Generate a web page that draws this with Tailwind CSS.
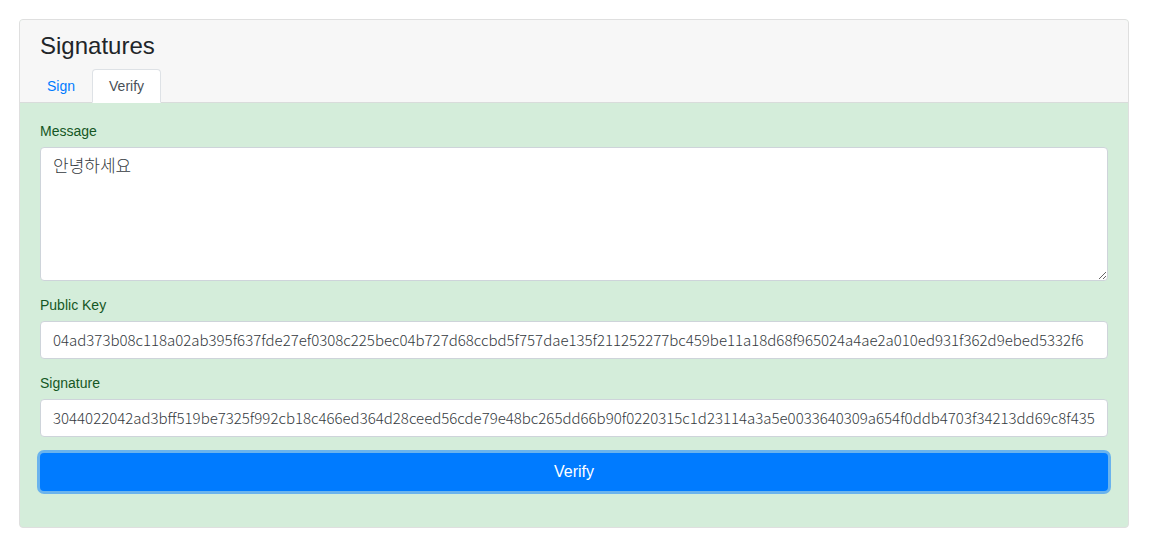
<!DOCTYPE html>
<html lang="en">
<head>
<meta charset="utf-8">
<meta name="viewport" content="width=device-width, initial-scale=1">
<title>Signatures</title>
<script src="https://cdn.jsdelivr.net/npm/@tailwindcss/browser@4"></script>
</head>
<body class="bg-white pt-[19px] pr-[23px] pb-7 pl-[19px] font-['Liberation_Sans','Noto_Sans_CJK_KR',sans-serif] text-sm/4 text-[#212529]">
<main class="rounded-sm border border-[#dfdfdf] bg-[#d4edda]">
  <header class="rounded-t-[3px] border-b border-[#d9dcdb] bg-[#f7f7f7] px-5 pt-3">
    <h1 class="mb-2 text-2xl/[28px] pb-px">Signatures</h1>
    <nav class="-mx-[10px] -mb-px flex">
      <a href="#sign" class="rounded-t-sm border border-transparent px-4 py-2 text-[#007bff]">Sign</a>
      <a href="#verify" aria-current="page" class="rounded-t-sm border border-[#dee2e6] border-b-white bg-white px-4 py-2 text-[#495057]">Verify</a>
    </nav>
  </header>
  <form id="verify" class="flex flex-col gap-4 px-5 pt-5 pb-9 text-[#155724]">
    <div class="flex flex-col gap-2">
      <label for="message">Message</label>
      <textarea id="message" class="block h-[134px] w-full resize-y rounded-sm border border-[#ced4da] bg-white px-3 py-1 font-['Noto_Sans_CJK_KR',sans-serif] text-[17px]/[26px] font-light text-[#343a40] outline-none">안녕하세요</textarea>
    </div>
    <div class="flex flex-col gap-2">
      <label for="public-key">Public Key</label>
      <input id="public-key" type="text" class="block h-[38px] w-full rounded-sm border border-[#ced4da] bg-white px-3 pt-1 pb-1.5 font-['Noto_Sans_CJK_KR',sans-serif] text-[15px]/6 font-light text-[#343a40] outline-none" value="04ad373b08c118a02ab395f637fde27ef0308c225bec04b727d68ccbd5f757dae135f211252277bc459be11a18d68f965024a4ae2a010ed931f362d9ebed5332f6">
    </div>
    <div class="flex flex-col gap-2">
      <label for="signature">Signature</label>
      <input id="signature" type="text" class="block h-[38px] w-full rounded-sm border border-[#ced4da] bg-white px-3 pt-1 pb-1.5 font-['Noto_Sans_CJK_KR',sans-serif] text-[15px]/6 font-light text-[#343a40] outline-none" value="3044022042ad3bff519be7325f992cb18c466ed364d28ceed56cde79e48bc265dd66b90f0220315c1d23114a3a5e0033640309a654f0ddb4703f34213dd69c8f435">
    </div>
    <button type="button" class="h-[38px] w-full rounded-sm bg-[#007bff] text-base/6 text-white ring-3 ring-[#007bff]/50 outline-none">Verify</button>
  </form>
</main>
</body>
</html>
